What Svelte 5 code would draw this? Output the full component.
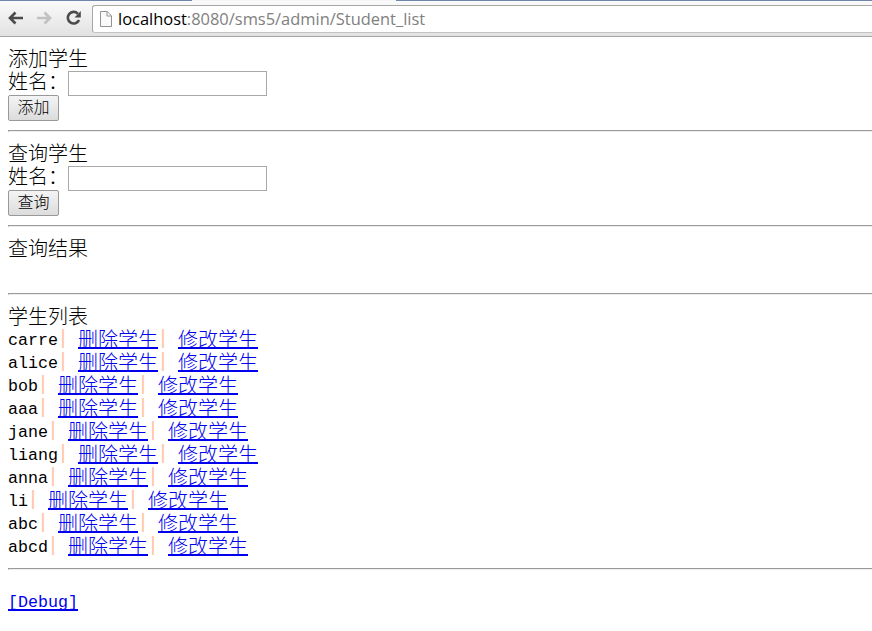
<script>
  const forms = [
    { title: '添加学生', action: '添加' },
    { title: '查询学生', action: '查询' }
  ];
  const students = ['carre', 'alice', 'bob', 'aaa', 'jane', 'liang', 'anna', 'li', 'abc', 'abcd'];
</script>

<div class="window">
  <div class="tabs"><span class="tab"></span></div>
  <header class="toolbar">
    <svg class="back" width="16" height="14" viewBox="0 0 16 14"><path d="M7.500 1.500 2 7l5.500 5.500M2.500 7H15" /></svg>
    <svg class="forward" width="16" height="14" viewBox="0 0 16 14"><path d="M8.500 1.500 14 7l-5.500 5.500M13.500 7H1" /></svg>
    <svg class="reload" width="18" height="16" viewBox="0 0 18 16"><path d="M12.900 3.800A5.800 5.800 0 1 0 14 9.900" /><path class="tip" d="M15.800 1v6.500H9.500z" /></svg>
    <div class="address">
      <svg class="page-icon" width="12" height="16" viewBox="0 0 12 16"><path d="M.5.5h6.700l4.300 4.300v10.700H.5zM7 .5V5h4.500" /></svg>
      <span class="url"><b>localhost</b>:8080/sms5/admin/Student_list</span>
    </div>
  </header>

  <main>
    {#each forms as form}
      <section>
        <div class="line">{form.title}</div>
        <label class="field"><span>姓名：</span><input type="text" /></label>
        <button type="button">{form.action}</button>
      </section>
      <hr />
    {/each}
    <section class="result"><div class="line">查询结果</div></section>
    <hr />
    <section class="students">
      <div class="line">学生列表</div>
      {#each students as name}
        <div class="line row">
          <span class="latin">{name}</span><span class="bar">|</span><a href="#delete">删除学生</a><span class="bar">|</span><a href="#edit">修改学生</a>
        </div>
      {/each}
    </section>
    <hr />
    <div class="line row debug"><a class="latin" href="#debug">[Debug]</a></div>
  </main>
</div>

<style>
  :global(body) { margin: 0; background: #fff; }
  .window { width: 872px; height: 631px; overflow: hidden; background: #fff; color: #000; }
  .tabs { height: 1px; background: #6f86ad; }
  .tab { display: block; width: 204px; height: 1px; margin-left: 192px; background: #f5f4f6; }
  .toolbar {
    box-sizing: border-box; display: flex; align-items: flex-start; height: 36px;
    padding: 4px 0 0 8px; border-bottom: 1px solid #a5a5a5;
    background: linear-gradient(#fbfafb, #e2e2e2);
  }
  svg { display: block; flex: none; fill: none; }
  .back, .forward { margin-top: 6px; stroke: #4b4b4b; stroke-width: 2.700; }
  .forward { margin-left: 12px; stroke: #c1c1c1; }
  .reload { margin: 5px 0 0 13px; stroke: #4b4b4b; stroke-width: 2.600; }
  .reload .tip { fill: #4b4b4b; stroke: none; }
  .address {
    box-sizing: border-box; flex: 1; display: flex; height: 28px; margin-left: 9px;
    border: 1px solid #a9a8a9; border-right: 0; border-bottom-color: #c3c3c3;
    border-radius: 3px 0 0 3px; background: #fff;
  }
  .page-icon { margin: 5px 0 0 7px; stroke: #929292; }
  .page-icon path { fill: #fafafa; }
  .url {
    margin-left: 6px; font: 16.450px/25px "Open Sans", "Noto Sans", sans-serif;
    color: #808080; white-space: nowrap;
  }
  .url b { font-weight: 400; color: #000; }

  main { padding: 10px 0 0 8px; }
  .line, .field {
    display: flex; height: 23px; white-space: nowrap;
    font: 300 20px/25px "Liberation Serif", "Noto Sans CJK SC", serif;
  }
  .field { height: 25px; }
  .field span { width: 60px; }
  input {
    box-sizing: border-box; width: 199px; height: 25px; margin: 1px 0 0; padding: 0 4px;
    border: 1px solid #a9a9a9; border-radius: 0; background: #fff; outline: 0;
  }
  button {
    display: block; box-sizing: border-box; width: 51px; height: 26px; margin: 0; padding: 0;
    border: 1px solid #999; border-radius: 2px; background: linear-gradient(#f4f4f4, #dcdcdc);
    font: 300 16px/24px "Liberation Sans", "Noto Sans CJK SC", sans-serif; color: #000;
  }
  hr { height: 0; margin: 9px 0 10px; border: 1px solid; border-color: #9a9a9a #eee #eee #9a9a9a; border-right: 0; }
  .result { height: 47px; }
  .latin { font: 16.660px/25px "Liberation Mono", monospace; }
  .bar {
    width: 20px; height: 23px; font: 20px/22px "Liberation Mono", monospace;
    text-indent: -1px; color: #ffc3a3;
  }
  .students { height: 254px; }
  .row a { box-sizing: border-box; height: 21px; border-bottom: 2px solid #0000ee; color: #0000ee; text-decoration: none; }
  .debug { margin-top: 20px; }
</style>
